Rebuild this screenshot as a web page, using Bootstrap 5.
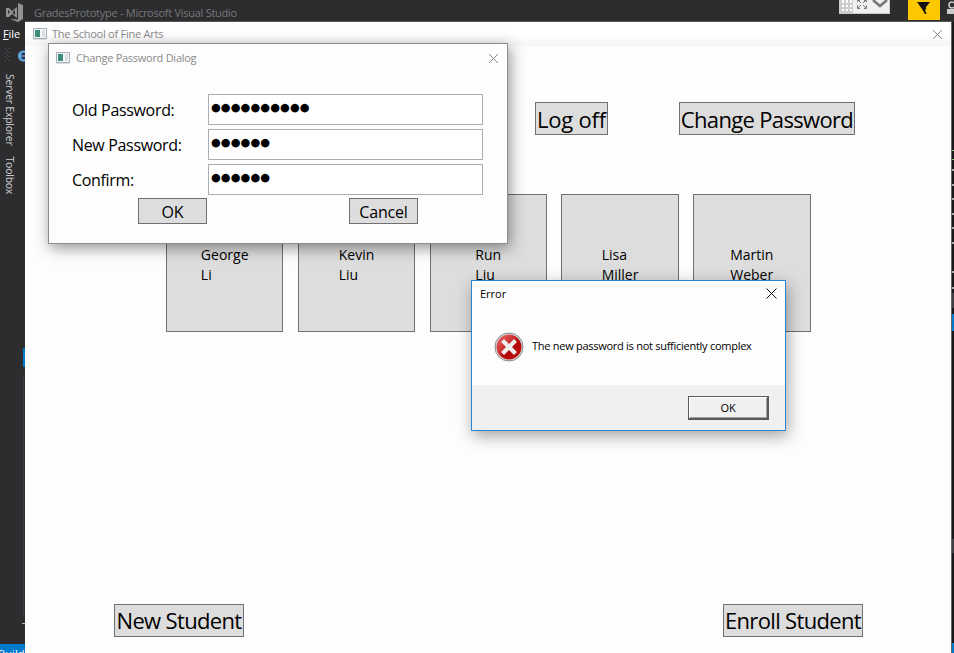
<!DOCTYPE html>
<html lang="en">
<head>
<meta charset="utf-8">
<meta name="viewport" content="width=device-width, initial-scale=1">
<title>The School of Fine Arts</title>
<link href="https://cdn.jsdelivr.net/npm/bootstrap@5.3.0/dist/css/bootstrap.min.css" rel="stylesheet">
<style>
body{font-family:"Open Sans","Noto Sans",sans-serif;background:#2d2d30;width:954px;height:653px;color:#000}
.desk{width:954px;height:653px}
.t{white-space:nowrap;line-height:1}
.ide-title{height:24px;padding:0 0 0 5px;color:#77777a;font-size:11px}
.ide-title .t{letter-spacing:-.27px}
.ide-logo{margin-right:11px}
.ide-side{width:25px;height:629px;color:#d0d0d0}
.ide-side .file{font-size:11px;color:#fff;padding:4px 0 0 3px;height:24px;letter-spacing:-.1px}
.vert{writing-mode:vertical-rl;font-size:10.5px;line-height:14px;margin-left:3px;white-space:nowrap;letter-spacing:-.25px;padding-top:2px}
.vert .gap{height:11px}
.status{height:9px;background:#007acc;color:#fff;font-size:11px;overflow:hidden}
.status .t{line-height:19px;margin-left:-2px;display:block;letter-spacing:.1px}
.mini-tools{left:839px;top:0}
.flag{left:908px;top:0}
.person{left:946px;top:0}
.edge{left:952px;top:22px}
.seam{left:22px;top:340px}
.win{background:#fdfdfd}
.main-win{left:25px;top:21px;width:927px;height:632px;border-top:1px solid #56565a;border-right:1px solid #666}
.bar{height:24px;color:#8a8a8a;font-size:11px}
.bar .t{letter-spacing:-.24px;padding-bottom:1px;margin-left:1px}
.main-win>.bar{padding:0 8px;background:linear-gradient(#fff,#fff 50%,#f5f5f5)}
.dlg{left:48px;top:43px;width:460px;height:201px;border:1px solid #8c8c8c;box-shadow:2px 4px 14px rgba(0,0,0,.42);z-index:2}
.dlg .bar{height:29px;padding:0 8px 1px 7px}
.dlg .bar .t{letter-spacing:-.27px;margin-left:2px}
.err{left:471px;top:280px;width:315px;height:151px;border:1px solid #2a86d0;box-shadow:2px 5px 15px rgba(0,0,0,.36);z-index:3;font-size:11px}
.err-bar{height:25px;padding:0 8px 0 8px}
.wpf{background:#ddd;border:1px solid #707070;border-radius:0;padding:0;color:#000;display:flex;align-items:center;justify-content:center;white-space:nowrap;line-height:1}
.big{height:33px;font-size:22px;letter-spacing:-.66px}
.b-log{width:73px;letter-spacing:-.2px}
.b-chg{width:176px}
.b-new{width:130px}
.b-enr{width:140px}
.foot-row .big{padding-bottom:2px}
.top-row{padding:56px 96px 0 510px}
.cards{padding:59px 0 0 141px;gap:14.4px}
.pupil{width:117.4px;height:138px;background:#ddd;border:1px solid #707070;font-size:14px;line-height:20px;padding-top:50px}
.foot-row{padding:272px 88px 0 89px}
.fields{padding:21px 24px 0 23px;gap:4px}
.fields .line{height:31px;font-size:16px}
.fields .lbl{width:136px;letter-spacing:-.33px}
.pw{height:31px;border:1px solid #abadb3;background:#fff;padding:0 0 3px 2px;font-family:"DejaVu Sans",sans-serif;font-size:11.2px;letter-spacing:.1px;color:#000}
.sm{width:69px;height:26px;font-size:16px;letter-spacing:-.2px}
.acts2{padding:3px 89px 0 89px}
.acts2 .sm{padding-top:1px}
.err-body{height:79px;padding:2px 0 0 22px}
.err-body .t{letter-spacing:-.27px;margin-left:8px;padding-bottom:2px}
.err-foot{height:45px;background:#f0f0f0;padding-right:16px}
.okb{width:81px;height:24px;background:#f0f0f0;border:1px solid #5a5a5a;border-right-width:2px;border-bottom-width:2px;box-shadow:inset 1px 1px #fff,inset -1px -1px #a0a0a0;border-radius:0;padding:0;font-size:11px;line-height:1;color:#000;letter-spacing:-.2px}
</style>
</head>
<body>
<div class="desk position-relative overflow-hidden">
  <div class="ide-title d-flex align-items-center">
    <svg class="ide-logo" width="18" height="19" viewBox="0 0 18 19"><path d="M13 0l5 2v14l-5 3-8-3 8 .500zM1 5l3 0 3 3 5-4v11l-5-4-3 3H1zM3 7v4l2-2zm7 0L7.500 9.500 10 12z" fill="#929294" fill-rule="evenodd"/></svg>
    <span class="t">GradesPrototype - Microsoft Visual Studio</span>
  </div>
  <div class="ide-side d-flex flex-column">
    <div class="file t"><u>F</u>ile</div>
    <svg width="25" height="24"><g fill="#55555a"><path d="M5 0h1v1H5zM9 0h1v1H9zM7 2h1v1H7zM5 4h1v1H5zM9 4h1v1H9zM7 6h1v1H7zM5 8h1v1H5zM9 8h1v1H9zM7 10h1v1H7zM5 12h1v1H5zM9 12h1v1H9z"/></g><circle cx="23.500" cy="8" r="4.500" fill="#1e3450" stroke="#62b0f0" stroke-width="2"/><path d="M20 8h5M22 5.500L19.500 8 22 10.500" stroke="#8cc8ff" fill="none"/></svg>
    <div class="vert align-self-start"><span>Server Explorer</span><span class="gap d-inline-block"></span><span>Toolbox</span></div>
    <div class="status mt-auto"><span class="t">Build</span></div>
  </div>

  <svg class="mini-tools position-absolute" width="51" height="14"><path fill="#f0f0f0" d="M0 0h51v14H0z"/><path fill="#ccc" d="M0 0h14v14H0z"/><path fill="#fff" d="M3 0h2v3H3zM7 0h2v3H7zM11 0h2v3h-2zM3 5h2v2H3zM7 5h2v2H7zM11 5h2v2h-2zM3 9h2v2H3zM7 9h2v2H7zM11 9h2v2h-2z"/><path d="M18.500 2V.500H21M25 .500h2.500V2M18.500 5.500V8.500H21M25 8.500h2.500V5.500M19 8l3-3M27 8l-3-3M19 0l3 3M27 0l-3 3" stroke="#777" fill="none"/><path d="M34 0l7 6 7-6" stroke="#777" stroke-width="2.500" fill="none"/><path d="M0 13.500h51M50.500 0v14" stroke="#ccc"/></svg>
  <svg class="flag position-absolute" width="32" height="21"><path fill="#fec800" d="M0 0h32v20H0z"/><path d="M9 2h13l-4 5v2l-1 1 1.500 4h-1.500L14 9z" fill="#111"/></svg>
  <svg class="person position-absolute" width="8" height="16"><path d="M1 14V9h7v5z" fill="#ccc"/><circle cx="6" cy="5" r="3" fill="none" stroke="#ccc" stroke-width="1.500"/></svg>
  <svg class="edge position-absolute" width="2" height="631"><path fill="#19191c" d="M0 0h2v631H0z"/><path fill="#8fc97e" d="M0 128h2v1H0zM0 137h2v1H0z"/><path fill="#aaa" d="M0 147h2v2H0zM0 162h2v2H0zM0 176h2v2H0zM0 191h2v2H0zM0 205h2v2H0zM0 220h2v2H0zM0 249h2v2H0zM0 265h2v2H0z"/><path fill="#3f3f46" d="M0 271h2v15H0zM0 517h2v14H0z"/><path fill="#007acc" d="M0 292h2v17H0zM0 621h2v10H0z"/></svg>
  <svg class="seam position-absolute" width="3" height="290"><path d="M1.500 35v240" stroke="#3f3f46"/><path d="M1 8h2v19H1z" fill="#007acc"/><path d="M0 283.500h3" stroke="#bbb"/></svg>

  <main class="win main-win position-absolute">
    <div class="bar d-flex align-items-center">
      <svg class="me-1" width="14" height="12"><path d="M.500.500h13v10H.500z" fill="#f4f6f8" stroke="#a5adb5"/><path d="M2 2h5v7H2z" fill="#3c8c7c"/><path d="M9 2h3v7H9z" fill="#dcdfe4"/><path d="M.500 11.500h13" stroke="#ddd"/></svg>
      <span class="t">The School of Fine Arts</span>
      <svg class="ms-auto" width="11" height="11"><path d="M1 1l9 9M10 1l-9 9" stroke="#888"/></svg>
    </div>
    <div class="top-row d-flex justify-content-between">
      <button class="wpf big b-log">Log off</button>
      <button class="wpf big b-chg">Change Password</button>
    </div>
    <div class="cards d-flex">
      <div class="pupil d-flex justify-content-center"><div>George<br>Li</div></div>
      <div class="pupil d-flex justify-content-center"><div>Kevin<br>Liu</div></div>
      <div class="pupil d-flex justify-content-center"><div>Run<br>Liu</div></div>
      <div class="pupil d-flex justify-content-center"><div>Lisa<br>Miller</div></div>
      <div class="pupil d-flex justify-content-center"><div>Martin<br>Weber</div></div>
    </div>
    <div class="foot-row d-flex justify-content-between">
      <button class="wpf big b-new">New Student</button>
      <button class="wpf big b-enr">Enroll Student</button>
    </div>
  </main>

  <section class="win dlg position-absolute">
    <div class="bar d-flex align-items-center">
      <svg class="me-1" width="14" height="12"><path d="M.500.500h13v10H.500z" fill="#f4f6f8" stroke="#a5adb5"/><path d="M2 2h5v7H2z" fill="#3c8c7c"/><path d="M9 2h3v7H9z" fill="#dcdfe4"/><path d="M.500 11.500h13" stroke="#ddd"/></svg>
      <span class="t">Change Password Dialog</span>
      <svg class="ms-auto" width="11" height="11"><path d="M1 1l9 9M10 1l-9 9" stroke="#888"/></svg>
    </div>
    <div class="fields d-flex flex-column">
      <div class="line d-flex align-items-center"><span class="lbl t">Old Password:</span><div class="pw t flex-fill d-flex align-items-center">●●●●●●●●●●</div></div>
      <div class="line d-flex align-items-center"><span class="lbl t">New Password:</span><div class="pw t flex-fill d-flex align-items-center">●●●●●●</div></div>
      <div class="line d-flex align-items-center"><span class="lbl t">Confirm:</span><div class="pw t flex-fill d-flex align-items-center">●●●●●●</div></div>
    </div>
    <div class="acts2 d-flex justify-content-between">
      <button class="wpf sm">OK</button>
      <button class="wpf sm">Cancel</button>
    </div>
  </section>

  <section class="win err position-absolute">
    <div class="err-bar d-flex align-items-center justify-content-between"><span class="t">Error</span>
      <svg width="11" height="11"><path d="M.500.500l10 10M10.500.500l-10 10" stroke="#111"/></svg></div>
    <div class="err-body d-flex align-items-center">
      <svg width="30" height="30" viewBox="0 0 30 30"><defs><linearGradient id="r" x1="0" y1="0" x2="1" y2="1"><stop offset="0" stop-color="#e87070"/><stop offset=".45" stop-color="#c92a2a"/><stop offset=".55" stop-color="#b00808"/><stop offset="1" stop-color="#c41010"/></linearGradient></defs><circle cx="15" cy="15" r="14" fill="#ddd" stroke="#888"/><circle cx="15" cy="15" r="12.500" fill="url(#r)"/><path d="M10 10l10 10M20 10L10 20" stroke="#eee" stroke-width="4.200" stroke-linecap="square"/></svg>
      <span class="t">The new password is not sufficiently complex</span>
    </div>
    <div class="err-foot d-flex align-items-center justify-content-end"><button class="okb">OK</button></div>
  </section>
</div>
<script src="https://cdn.jsdelivr.net/npm/bootstrap@5.3.0/dist/js/bootstrap.bundle.min.js"></script>
</body>
</html>
